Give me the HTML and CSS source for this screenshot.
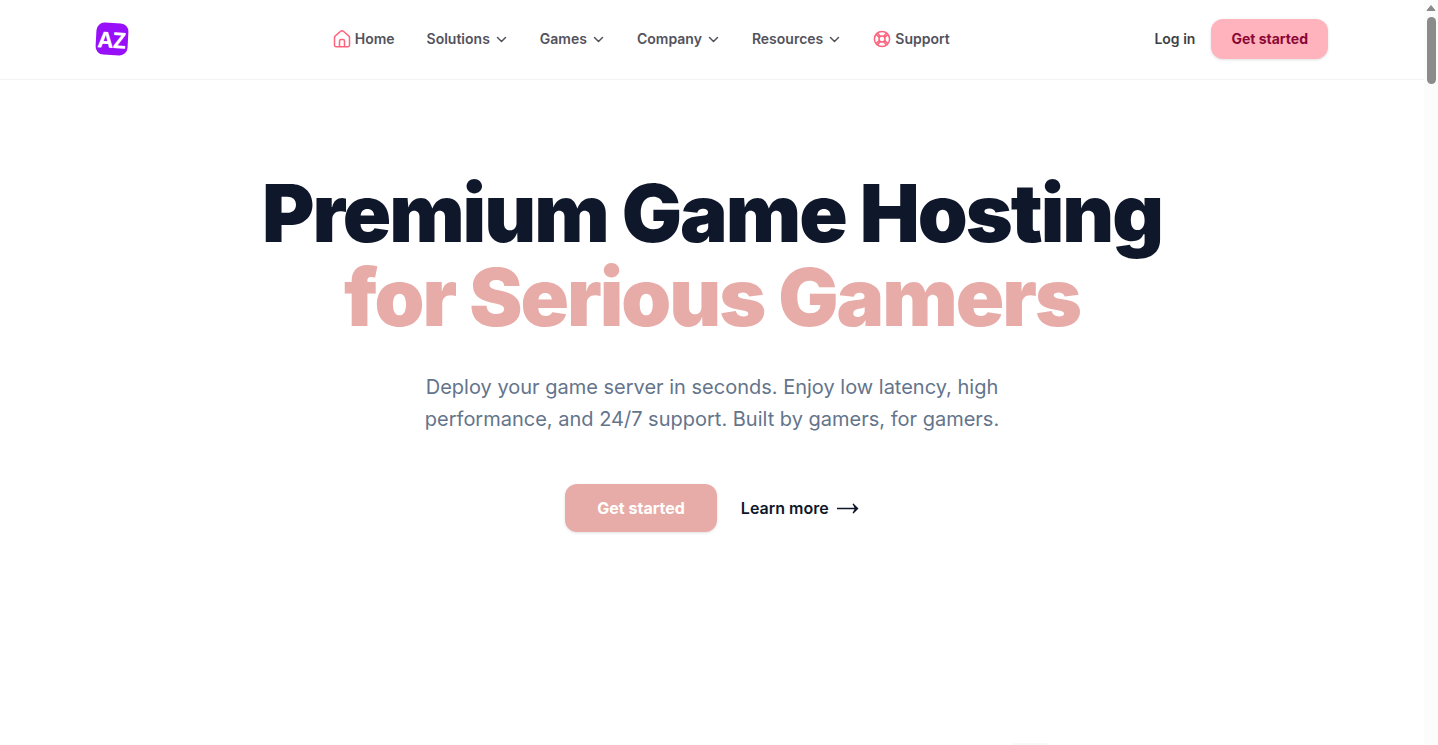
FILE: index.html
```html
<!DOCTYPE html>
<html lang="en">
<head>
<meta charset="utf-8">
<meta name="viewport" content="width=device-width, initial-scale=1">
<title>Premium Game Hosting</title>
<link rel="stylesheet" href="styles.css">
</head>
<body>
<div class="page">
  <header class="header">
    <div class="header-inner">
      <a class="logo" href="#" aria-label="AZ home"><span class="logo-tile"><span class="logo-text">AZ</span></span></a>
      <nav class="nav" aria-label="Main">
        <a class="nav-item" href="#">
          <svg class="nav-icon" viewBox="0 0 18 18" aria-hidden="true"><path d="M1.500 7.500c0-.7.3-1.300.8-1.700l5.300-4.500c.8-.6 2-.6 2.800 0l5.300 4.500c.5.4.8 1 .8 1.700v7.800c0 .8-.6 1.400-1.400 1.400H2.900c-.8 0-1.400-.6-1.400-1.400z"/><path d="M6.500 16.500v-5.500c0-.8.6-1.500 1.500-1.500h2c.9 0 1.500.7 1.500 1.500v5.500"/></svg>
          Home
        </a>
        <button class="nav-item" type="button">Solutions<svg class="chevron" viewBox="0 0 14 14" aria-hidden="true"><path d="m3.500 5.500 4 4 4-4"/></svg></button>
        <button class="nav-item" type="button">Games<svg class="chevron" viewBox="0 0 14 14" aria-hidden="true"><path d="m3.500 5.500 4 4 4-4"/></svg></button>
        <button class="nav-item" type="button">Company<svg class="chevron" viewBox="0 0 14 14" aria-hidden="true"><path d="m3.500 5.500 4 4 4-4"/></svg></button>
        <button class="nav-item" type="button">Resources<svg class="chevron" viewBox="0 0 14 14" aria-hidden="true"><path d="m3.500 5.500 4 4 4-4"/></svg></button>
        <a class="nav-item" href="#">
          <svg class="nav-icon" viewBox="0 0 18 18" aria-hidden="true"><circle cx="9" cy="9" r="7.600"/><circle cx="9" cy="9" r="3"/><path d="m3 4.400 3.400 3.100M4.400 3l3.100 3.400M15 4.400l-3.400 3.100M13.600 3l-3.100 3.400M3 13.600l3.400-3.100M4.400 15l3.100-3.400M15 13.600l-3.400-3.100M13.600 15l-3.100-3.400"/></svg>
          Support
        </a>
      </nav>
      <div class="account">
        <a class="login" href="#">Log in</a>
        <a class="button button-small" href="#">Get started</a>
      </div>
    </div>
  </header>
  <main class="hero">
    <h1 class="title">Premium Game Hosting<br><span class="title-accent">for Serious Gamers</span></h1>
    <p class="lead">Deploy your game server in seconds. Enjoy low latency, high performance, and 24/7 support. Built by gamers, for gamers.</p>
    <div class="actions">
      <a class="button button-large" href="#">Get started</a>
      <a class="learn" href="#">Learn more <svg class="arrow" viewBox="0 0 22 12" aria-hidden="true"><path d="M0 5.700h17.500L15.500 2l1-.5 5 5-5 5-1-.5 2-3.700H0z"/></svg></a>
    </div>
  </main>
  <section class="preview" aria-hidden="true"><div class="preview-card"></div></section>
</div>
<div class="scrollbar" aria-hidden="true">
  <svg class="scroll-arrow" viewBox="0 0 10 8"><path d="M5 1.500 9 6.500H1z"/></svg>
  <div class="thumb"></div>
</div>
</body>
</html>
```
FILE: styles.css
```css
* { box-sizing: border-box; }

body {
  margin: 0;
  height: 100vh;
  overflow: hidden;
  display: grid;
  grid-template-columns: 1fr 14px;
  background: #fff;
  color: #0f172a;
  font-family: Inter, "Liberation Sans", sans-serif;
}

a { color: inherit; text-decoration: none; }

.page {
  display: flex;
  flex-direction: column;
  min-width: 0;
  height: 100vh;
  overflow: hidden;
}

.header { border-bottom: 1px solid #f3f3f4; }

.header-inner {
  display: flex;
  align-items: center;
  justify-content: space-between;
  max-width: 1280px;
  margin: 0 auto;
  padding: 19px 24px 20px;
}

.logo-tile {
  display: grid;
  place-items: center;
  width: 32px;
  height: 32px;
  border-radius: 8px;
  background: #9810fa;
  color: #fff;
  transform: rotate(3deg);
}

.logo-text { font: 700 22px/28px "Noto Sans", sans-serif; }

.nav { display: flex; align-items: center; gap: 32px; }

.nav-item {
  display: flex;
  align-items: center;
  gap: 4px;
  padding: 0;
  border: 0;
  background: none;
  color: #52525c;
  font: 600 14px/20px Inter, "Liberation Sans", sans-serif;
}

.nav-icon {
  width: 18px;
  height: 18px;
  fill: none;
  stroke: #ff637e;
  stroke-width: 1.5;
}

.chevron {
  width: 14px;
  height: 14px;
  fill: none;
  stroke: currentColor;
  stroke-width: 1.5;
  stroke-linecap: round;
  stroke-linejoin: round;
}

.account { display: flex; align-items: center; gap: 16px; }

.login { color: #3f3f46; font-size: 14px; font-weight: 600; line-height: 20px; }

.button {
  border-radius: 12px;
  box-shadow: 0 1px 3px rgb(0 0 0 / 12%);
}

.button-small {
  padding: 10px 20px;
  background: #ffb3bd;
  color: #8b0836;
  font-size: 14px;
  font-weight: 700;
  line-height: 20px;
}

.button-large {
  padding: 12px 32px;
  background: #e8aca8;
  color: #fff;
  font-size: 16px;
  font-weight: 700;
  line-height: 24px;
}

.hero {
  display: flex;
  flex-direction: column;
  align-items: center;
  padding: 91px 24px 0;
  text-align: center;
}

.title {
  margin: 0;
  font-size: 80px;
  font-weight: 900;
  line-height: 84px;
  letter-spacing: -0.025em;
}

.title-accent { color: #e8aca8; }

.lead {
  max-width: 600px;
  margin: 32px 0 0;
  color: #64748b;
  font-size: 20px;
  line-height: 32px;
}

.actions { display: flex; align-items: center; gap: 24px; margin-top: 49px; }

.learn {
  display: flex;
  align-items: center;
  gap: 8px;
  font-size: 16px;
  font-weight: 600;
  line-height: 24px;
}

.arrow { width: 22px; height: 12px; fill: currentColor; }

.preview { margin-top: auto; display: flex; justify-content: center; }

.preview-card {
  width: 36px;
  height: 2px;
  margin-left: 636px;
  border-radius: 8px 8px 0 0;
  background: #f9f9f9;
}

.scrollbar {
  display: flex;
  flex-direction: column;
  align-items: center;
  gap: 5px;
  padding-top: 4px;
  background: #fcfcfc;
}

.scroll-arrow { width: 10px; height: 8px; fill: #8b8b8b; stroke: #8b8b8b; stroke-linejoin: round; }

.thumb { width: 9px; height: 67px; border-radius: 5px; background: #8b8b8b; }
```
